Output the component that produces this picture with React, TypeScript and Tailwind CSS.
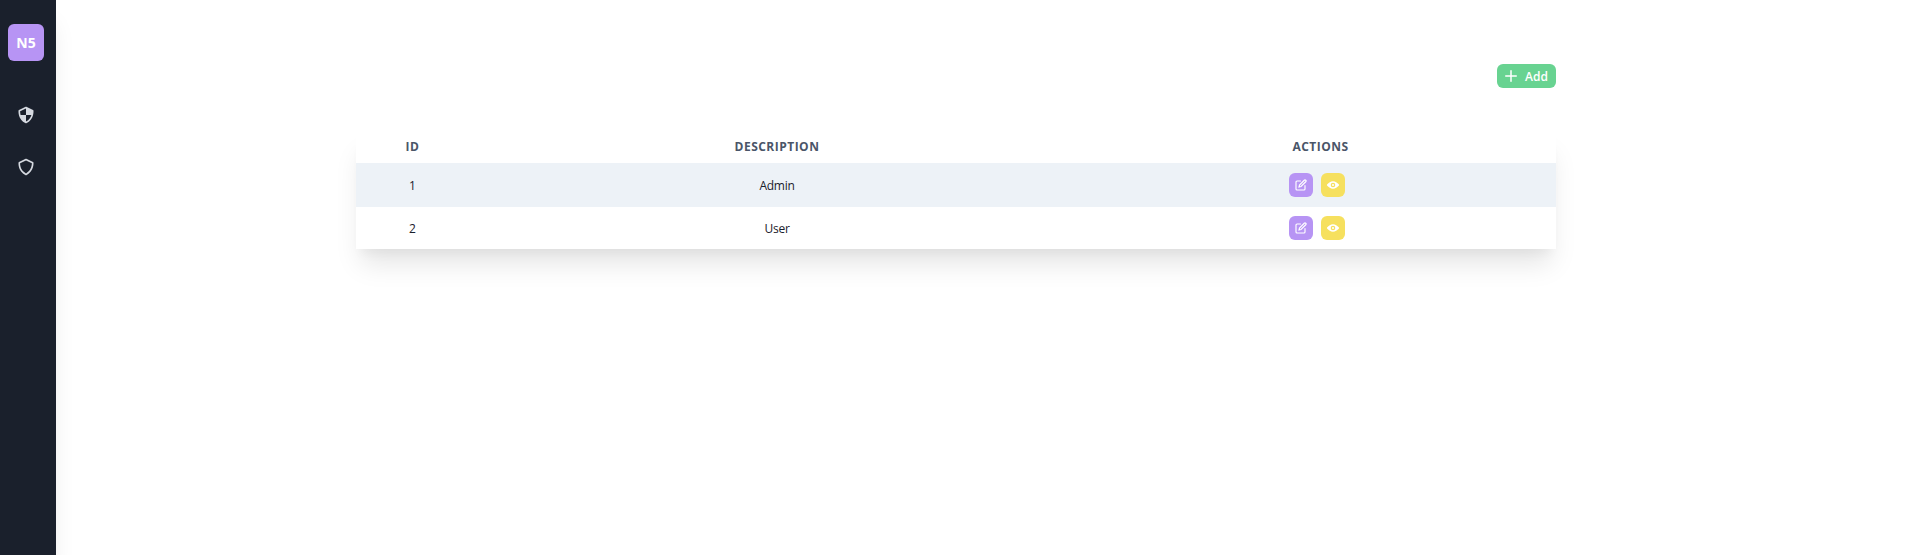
import { BiShield, BiShieldQuarter } from "react-icons/bi";

const rows = [
  { id: 1, description: "Admin" },
  { id: 2, description: "User" },
];

function EditIcon() {
  return (
    <svg viewBox="0 0 24 24" className="size-3" fill="none" stroke="currentColor" strokeLinecap="round" strokeWidth="2.3">
      <path d="M11 4H4a2 2 0 0 0-2 2v14a2 2 0 0 0 2 2h14a2 2 0 0 0 2-2v-7" />
      <path d="M18.5 2.5a2.121 2.121 0 0 1 3 3L12 15l-4 1 1-4Z" />
    </svg>
  );
}

function ViewIcon() {
  return (
    <svg viewBox="0 0 24 24" className="size-3" fill="currentColor">
      <path d="M23.432,10.524C20.787,7.614,16.4,4.538,12,4.6,7.6,4.537,3.213,7.615.568,10.524a2.211,2.211,0,0,0,0,2.948C3.182,16.351,7.507,19.4,11.839,19.4h.308c4.347,0,8.671-3.049,11.288-5.929A2.21,2.21,0,0,0,23.432,10.524ZM7.4,12A4.6,4.6,0,1,1,12,16.6,4.6,4.6,0,0,1,7.4,12Z" />
      <circle cx="12" cy="12" r="2.2" />
    </svg>
  );
}

export default function App() {
  return (
    <div className="flex h-screen bg-white font-['Open_Sans','Noto_Sans',sans-serif] text-[#1a202c]">
      <nav className="flex w-14 shrink-0 flex-col bg-[#1a202c] pl-2 pt-6 text-[#d5d9e0] shadow-[0_20px_25px_-5px_rgba(0,0,0,0.1),0_10px_10px_-5px_rgba(0,0,0,0.04)]">
        <div className="flex h-[37px] w-9 items-center justify-center rounded-md bg-[#b794f4] text-sm font-bold text-white">
          N5
        </div>
        <a className="mt-11 flex w-9 justify-center"><BiShieldQuarter size={20} /></a>
        <a className="mt-8 flex w-9 justify-center"><BiShield size={20} /></a>
      </nav>
      <main className="flex-1 pl-[300px] pr-[360px] pt-16">
        <div className="flex justify-end">
          <button className="flex h-6 w-[59px] items-center justify-center gap-2 rounded-md bg-[#68d391] text-xs font-semibold text-white">
            <svg viewBox="0 0 24 24" className="size-3" fill="currentColor">
              <path d="M0,12a1.5,1.5,0,0,0,1.5,1.5h8.75a.25.25,0,0,1,.25.25V22.5a1.5,1.5,0,0,0,3,0V13.75a.25.25,0,0,1,.25-.25H22.5a1.5,1.5,0,0,0,0-3H13.75a.25.25,0,0,1-.25-.25V1.5a1.5,1.5,0,0,0-3,0v8.75a.25.25,0,0,1-.25.25H1.5A1.5,1.5,0,0,0,0,12Z" />
            </svg>
            <span className="pt-px">Add</span>
          </button>
        </div>
        <table className="mt-[42px] w-full table-fixed border-collapse text-center text-xs shadow-[0_20px_25px_-5px_rgba(0,0,0,0.1),0_10px_10px_-5px_rgba(0,0,0,0.04)]">
          <colgroup>
            <col className="w-[113px]" />
            <col className="w-[616px]" />
            <col className="w-[471px]" />
          </colgroup>
          <thead>
            <tr className="h-[33px] bg-white tracking-[0.04em] text-[#4a5568]">
              <th className="p-0">ID</th>
              <th className="p-0">DESCRIPTION</th>
              <th className="p-0">ACTIONS</th>
            </tr>
          </thead>
          <tbody>
            {rows.map((row) => (
              <tr key={row.id} className="h-[42px] bg-white odd:h-11 odd:bg-[#edf2f7]">
                <td className="p-0 pt-0.5">{row.id}</td>
                <td className="p-0 pt-0.5 tracking-[-0.02em]">{row.description}</td>
                <td className="p-0">
                  <div className="mr-2 flex justify-center gap-2">
                    <button aria-label="Edit" className="flex size-6 items-center justify-center rounded-md bg-[#b794f4] text-white"><EditIcon /></button>
                    <button aria-label="View" className="flex size-6 items-center justify-center rounded-md bg-[#f6e05e] text-white"><ViewIcon /></button>
                  </div>
                </td>
              </tr>
            ))}
          </tbody>
        </table>
      </main>
    </div>
  );
}
